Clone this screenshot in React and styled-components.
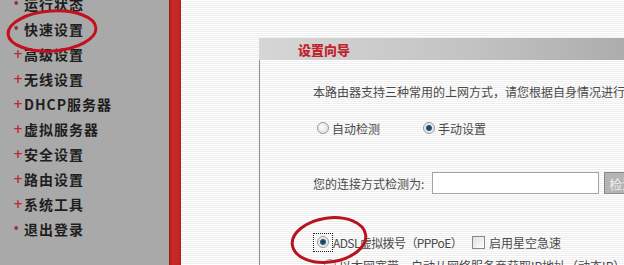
import React from "react";
import styled, { createGlobalStyle } from "styled-components";

const GlobalStyle = createGlobalStyle`
  html, body {
    margin: 0;
    padding: 0;
    overflow: hidden;
  }
  body {
    font-family: "Noto Sans CJK SC", "Liberation Sans", sans-serif;
  }
`;

const menu = [
  { label: "运行状态", mark: "dot" },
  { label: "快速设置", mark: "dot" },
  { label: "高级设置", mark: "plus" },
  { label: "无线设置", mark: "plus" },
  { label: "DHCP服务器", mark: "plus" },
  { label: "虚拟服务器", mark: "plus" },
  { label: "安全设置", mark: "plus" },
  { label: "路由设置", mark: "plus" },
  { label: "系统工具", mark: "plus" },
  { label: "退出登录", mark: "dot" },
];

const App = () => {
  return (
    <>
      <GlobalStyle />
      <Page>
        <Sidebar>
          <MenuList>
            {menu.map((m) => (
              <MenuItem key={m.label}>
                <Mark $type={m.mark}>{m.mark === "plus" ? "+" : "•"}</Mark>
                <MenuLabel>{m.label}</MenuLabel>
              </MenuItem>
            ))}
          </MenuList>
        </Sidebar>
        <RedBar />
        <Main>
          <Panel>
            <PanelHeader>
              <PanelTitle>设置向导</PanelTitle>
            </PanelHeader>
            <PanelBody>
              <Intro>本路由器支持三种常用的上网方式，请您根据自身情况进行选择。</Intro>
              <Row $gap={20} $mt={19}>
                <Option>
                  <Radio />
                  <span>自动检测</span>
                </Option>
                <Option>
                  <Radio $checked />
                  <span>手动设置</span>
                </Option>
              </Row>
              <Row $mt={35} $h={22}>
                <span>您的连接方式检测为:</span>
                <TextInput />
                <GrayButton>检测</GrayButton>
              </Row>
              <Row $mt={39} $indent={1}>
                <Focus>
                  <Radio $checked />
                </Focus>
                <Tight>ADSL虚拟拨号（PPPoE）</Tight>
                <Checkbox />
                <span>启用星空急速</span>
              </Row>
              <Row $mt={5} $indent={7}>
                <Radio />
                <span>以太网宽带，自动从网络服务商获取IP地址（动态IP）</span>
              </Row>
            </PanelBody>
          </Panel>
        </Main>
        <Marks width="624" height="265" viewBox="0 0 624 265">
          <ellipse
            cx="52"
            cy="31"
            rx="44"
            ry="20"
            transform="rotate(-4 52 31)"
            fill="none"
            stroke="#c4101c"
            strokeWidth="3"
          />
          <ellipse
            cx="329"
            cy="240"
            rx="37"
            ry="22"
            transform="rotate(-8 329 240)"
            fill="none"
            stroke="#b81420"
            strokeWidth="3"
          />
        </Marks>
      </Page>
    </>
  );
};

export default App;

const Page = styled.div`
  position: relative;
  width: 624px;
  height: 265px;
  display: flex;
  overflow: hidden;
  background: repeating-linear-gradient(
    to bottom,
    #ffffff 0px,
    #ffffff 1px,
    #eeeeee 1px,
    #eeeeee 2px
  );
`;

const Sidebar = styled.div`
  width: 169px;
  flex-shrink: 0;
  background: #a9a9a9;
`;

const MenuList = styled.div`
  display: flex;
  flex-direction: column;
  margin-top: -9px;
`;

const MenuItem = styled.div`
  height: 25px;
  display: flex;
  align-items: center;
  padding-left: 13px;
`;

const Mark = styled.span`
  width: 11px;
  color: ${(p) => (p.$type === "plus" ? "#b82c36" : "#8a3040")};
  font-family: "DejaVu Sans", sans-serif;
  font-weight: bold;
  font-size: ${(p) => (p.$type === "plus" ? "12px" : "10px")};
  line-height: 1;
`;

const MenuLabel = styled.span`
  font-family: "Noto Sans CJK SC", sans-serif;
  font-weight: 700;
  font-size: 14px;
  letter-spacing: 1px;
  color: #1e1e1e;
`;

const RedBar = styled.div`
  width: 12px;
  flex-shrink: 0;
  background: linear-gradient(to right, #9a1c1c 0%, #c82a28 30%, #c42624 80%, #b01e1e 100%);
`;

const Main = styled.div`
  flex: 1;
  padding: 38px 0 0 78px;
`;

const Panel = styled.div`
  display: flex;
  flex-direction: column;
  width: 400px;
`;

const PanelHeader = styled.div`
  height: 22px;
  display: flex;
  align-items: center;
  padding-left: 39px;
  background: linear-gradient(to right, #d6d6d6 0%, #c4c4c4 50%, #a8a8a8 100%);
`;

const PanelTitle = styled.span`
  font-family: "Noto Sans CJK SC", sans-serif;
  font-weight: 900;
  font-size: 13px;
  color: #c0262e;
`;

const PanelBody = styled.div`
  border-left: 1px solid #8c8c8c;
  padding: 24px 0 0 53px;
  height: 200px;
  font-family: "Noto Sans CJK SC", sans-serif;
  font-size: 12px;
  color: #4a4a4a;
`;

const Intro = styled.div`
  white-space: nowrap;
  line-height: 16px;
`;

const Row = styled.div`
  display: flex;
  align-items: center;
  white-space: nowrap;
  height: ${(p) => p.$h || 18}px;
  margin-top: ${(p) => p.$mt || 0}px;
  padding-left: ${(p) => p.$indent || 0}px;
  gap: ${(p) => (p.$gap ? `${p.$gap}px` : "0")};
`;

const Option = styled.label`
  display: flex;
  align-items: center;
  width: 86px;
`;

const Radio = styled.span`
  width: 12px;
  height: 12px;
  border-radius: 50%;
  margin: 0 3px 0 4px;
  box-sizing: border-box;
  border: 1px solid #9a9a9a;
  background: ${(p) =>
    p.$checked
      ? "radial-gradient(circle, #123a50 0, #2a5a78 2.5px, #dfe6ec 3.5px, #f6f6f6 6px)"
      : "radial-gradient(circle at 40% 40%, #ffffff 0, #e2e2e2 6px)"};
`;

const Focus = styled.span`
  display: flex;
  align-items: center;
  height: 17px;
  padding-right: 1px;
  outline: 1px dotted #222;
  margin-right: 1px;

  & > span {
    margin: 0 2px 0 3px;
  }
`;

const Tight = styled.span`
  letter-spacing: -0.6px;
`;

const TextInput = styled.div`
  width: 165px;
  height: 20px;
  margin-left: 8px;
  background: #fff;
  border: 1px solid #a4a4a4;
`;

const GrayButton = styled.div`
  margin-left: 5px;
  height: 20px;
  width: 40px;
  display: flex;
  align-items: center;
  padding-left: 4px;
  background: #b4b4b4;
  border: 1px solid #888;
  color: #f0f0f0;
  font-size: 13px;
`;

const Checkbox = styled.span`
  width: 11px;
  height: 11px;
  margin: 0 4px 0 10px;
  border: 1px solid #8a8a8a;
  background: linear-gradient(135deg, #e0e0e0, #ffffff);
`;

const Marks = styled.svg`
  position: absolute;
  left: 0;
  top: 0;
  pointer-events: none;
`;
